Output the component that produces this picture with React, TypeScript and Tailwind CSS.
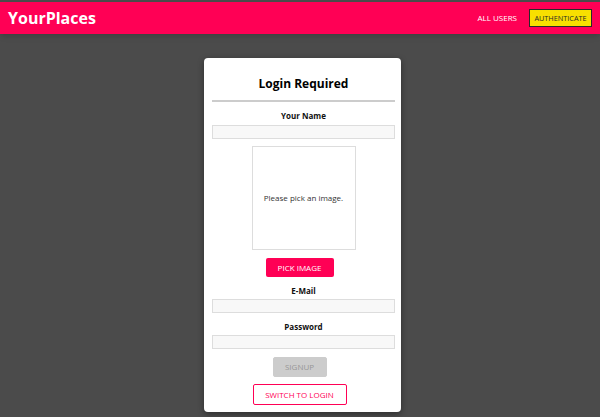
import React from "react";

const font = { fontFamily: '"Open Sans", "Noto Sans", sans-serif' };

function Field({ label, first }: { label: string; first?: boolean }) {
  return (
    <div className="flex flex-col items-stretch">
      <label className="text-center text-[8px] leading-[12px] font-bold text-[#111]">
        {label}
      </label>
      <input
        className={`${first ? "mt-[3px]" : "mt-[2px]"} h-[14px] w-full border border-[#ddd] bg-[#f8f8f8] outline-none`}
      />
    </div>
  );
}

export default function App() {
  return (
    <div className="min-h-[417px] bg-[#4b4b4b] pt-[2px]" style={font}>
      {/* Main header */}
      <header className="flex h-[32px] items-center justify-between bg-[#ff0055] pl-2 pr-2 shadow-md">
        <h1 className="text-[16px] font-bold leading-none text-white">YourPlaces</h1>
        <nav className="flex items-center gap-3">
          <a className="whitespace-nowrap text-[8px] text-white">ALL USERS</a>
          <a className="flex h-[18px] w-[63px] items-center justify-center whitespace-nowrap border border-[#292929] bg-[#f8df00] text-[7.3px] text-[#292929]">
            AUTHENTICATE
          </a>
        </nav>
      </header>

      {/* Auth card */}
      <div className="flex justify-center pl-[5px]">
        <div className="mt-[24px] w-[197px] rounded-[4px] bg-white pb-[7px] pl-2 pr-[6px] shadow-[0_2px_6px_rgba(0,0,0,0.4)]">
          <div className="h-[44px] border-b-2 border-[#ccc] pt-[17px] text-center">
            <h2 className="text-[12px] leading-[18px] font-bold text-black">Login Required</h2>
          </div>

          <form className="flex flex-col">
            <div className="mt-[8px]">
              <Field label="Your Name" first />
            </div>

            <div className="mt-[7px] flex flex-col items-center">
              <div className="flex h-[104px] w-[104px] items-center justify-center border border-[#ddd]">
                <p className="text-[8px] text-[#333]">Please pick an image.</p>
              </div>
              <button
                type="button"
                className="mr-[8px] mt-[8px] h-[19px] w-[68px] rounded-[2px] bg-[#ff0055] text-[8px] text-white"
              >
                PICK IMAGE
              </button>
            </div>

            <div className="mt-[8px]">
              <Field label="E-Mail" />
            </div>
            <div className="mt-[8px]">
              <Field label="Password" />
            </div>

            <div className="mt-[8px] flex flex-col items-center">
              <button
                type="button"
                disabled
                className="mr-[8px] h-[20px] w-[54px] rounded-[2px] border border-[#ccc] bg-[#ccc] text-[8px] text-[#979797]"
              >
                SIGNUP
              </button>
              <button
                type="button"
                className="mr-[8px] mt-[7px] h-[21px] w-[94px] rounded-[2px] border border-[#ff0055] bg-white text-[8px] text-[#ff0055]"
              >
                SWITCH TO LOGIN
              </button>
            </div>
          </form>
        </div>
      </div>
    </div>
  );
}
